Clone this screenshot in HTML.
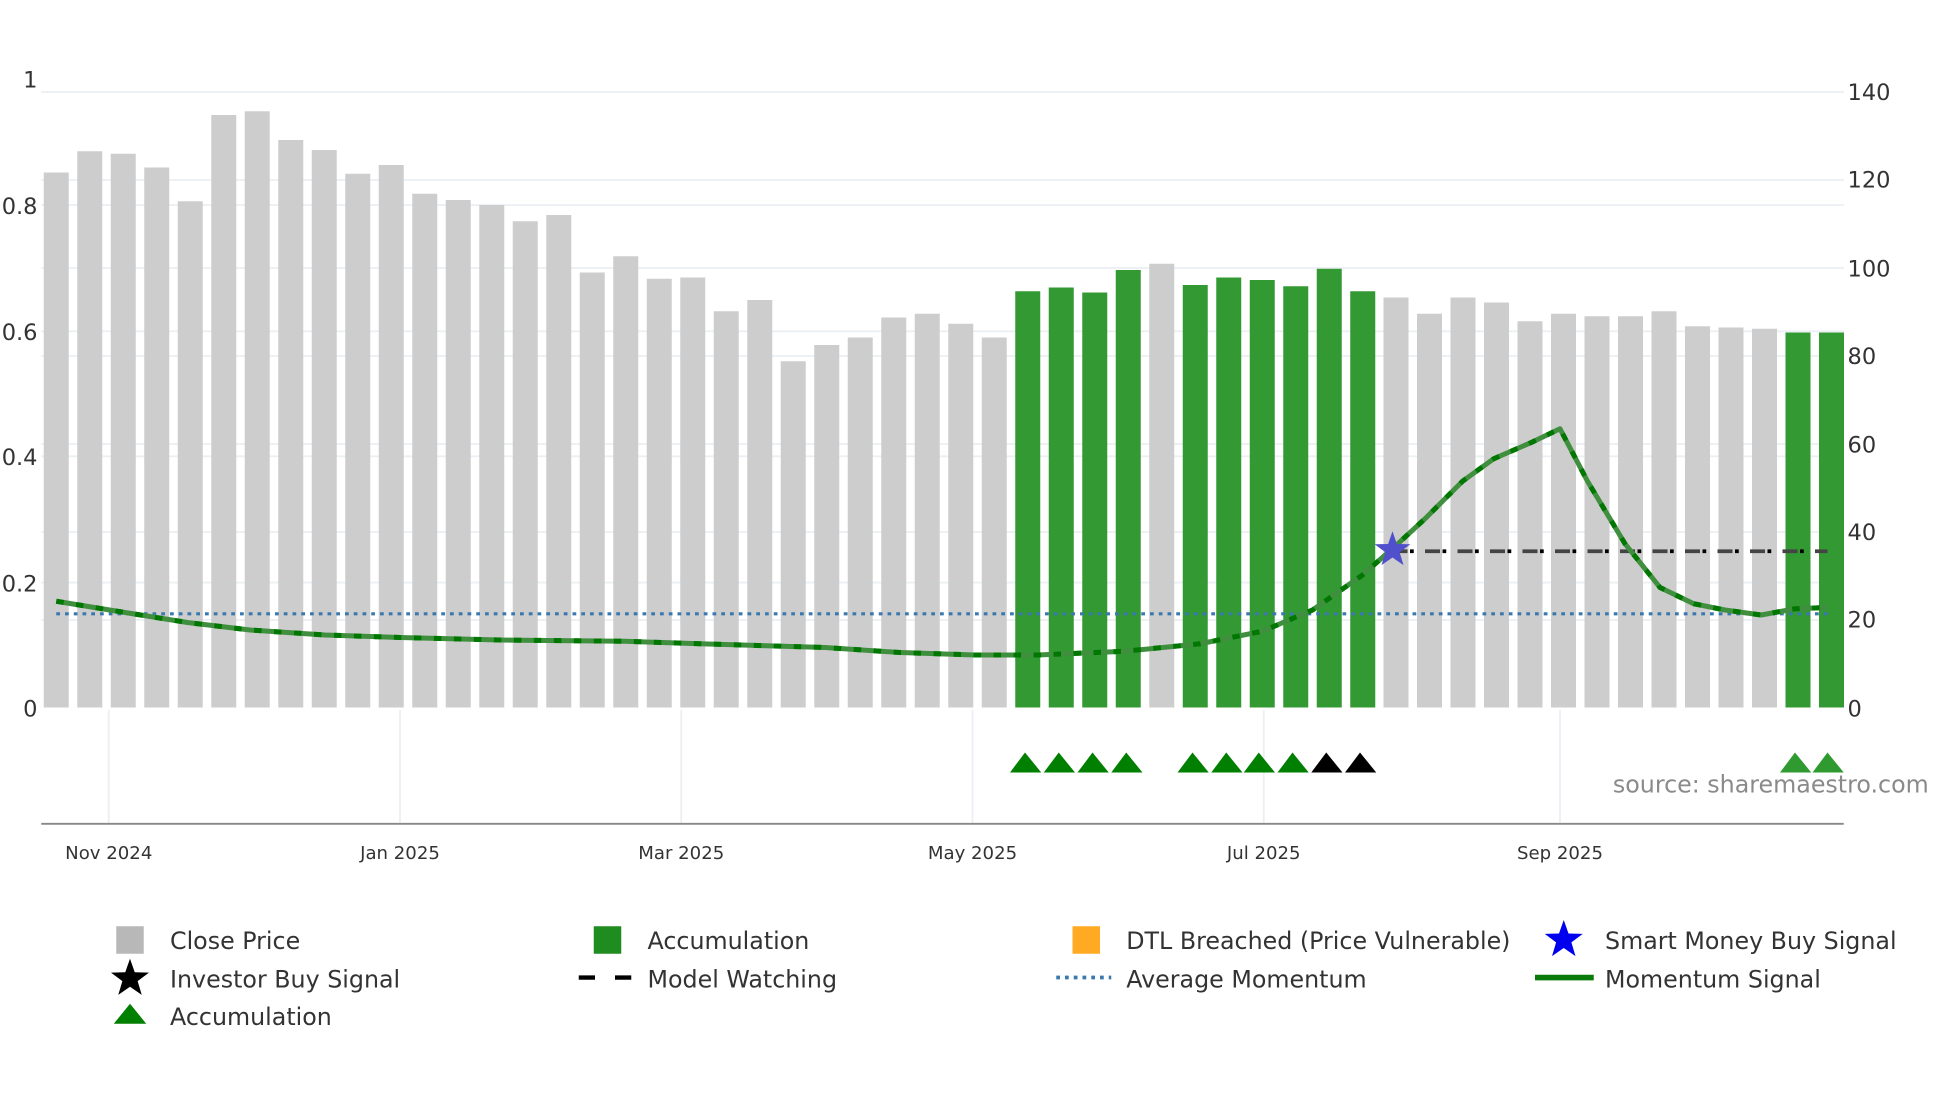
<!DOCTYPE html>
<html><head><meta charset="utf-8"><style>
html,body{margin:0;padding:0;background:#fff;width:1960px;height:1102px;overflow:hidden}
svg{display:block}
text{font-family:"DejaVu Sans","Liberation Sans",sans-serif}
</style></head><body>
<svg width="1960" height="1102" viewBox="0 0 1568 881.6" xmlns="http://www.w3.org/2000/svg">
<rect width="1568" height="881.6" fill="#fff"/>
<g stroke="#eceff4" stroke-width="1.5">
<line x1="33" x2="1475" y1="73.5" y2="73.5"/><line x1="33" x2="1475" y1="143.9" y2="143.9"/>
<line x1="33" x2="1475" y1="214.3" y2="214.3"/><line x1="33" x2="1475" y1="284.7" y2="284.7"/>
<line x1="33" x2="1475" y1="355.1" y2="355.1"/><line x1="33" x2="1475" y1="425.5" y2="425.5"/>
<line x1="33" x2="1475" y1="495.9" y2="495.9"/>
<line x1="33" x2="1475" y1="164" y2="164"/><line x1="33" x2="1475" y1="265" y2="265"/>
<line x1="33" x2="1475" y1="365" y2="365"/><line x1="33" x2="1475" y1="466" y2="466"/>
<line x1="87" x2="87" y1="568" y2="659"/><line x1="320" x2="320" y1="568" y2="659"/>
<line x1="545" x2="545" y1="568" y2="659"/><line x1="778" x2="778" y1="568" y2="659"/>
<line x1="1011" x2="1011" y1="568" y2="659"/><line x1="1248" x2="1248" y1="568" y2="659"/>
</g>
<g fill="#cacaca" fill-opacity="0.95">
<rect x="35" y="138" width="20" height="428"/><rect x="61.8" y="121" width="20" height="445"/>
<rect x="88.6" y="123" width="20" height="443"/><rect x="115.4" y="134" width="20" height="432"/>
<rect x="142.2" y="161" width="20" height="405"/><rect x="169" y="92" width="20" height="474"/>
<rect x="195.8" y="89" width="20" height="477"/><rect x="222.6" y="112" width="20" height="454"/>
<rect x="249.4" y="120" width="20" height="446"/><rect x="276.2" y="139" width="20" height="427"/>
<rect x="303" y="132" width="20" height="434"/><rect x="329.8" y="155" width="20" height="411"/>
<rect x="356.6" y="160" width="20" height="406"/><rect x="383.4" y="164" width="20" height="402"/>
<rect x="410.2" y="177" width="20" height="389"/><rect x="437" y="172" width="20" height="394"/>
<rect x="463.8" y="218" width="20" height="348"/><rect x="490.6" y="205" width="20" height="361"/>
<rect x="517.4" y="223" width="20" height="343"/><rect x="544.2" y="222" width="20" height="344"/>
<rect x="571" y="249" width="20" height="317"/><rect x="597.8" y="240" width="20" height="326"/>
<rect x="624.6" y="289" width="20" height="277"/><rect x="651.4" y="276" width="20" height="290"/>
<rect x="678.2" y="270" width="20" height="296"/><rect x="705" y="254" width="20" height="312"/>
<rect x="731.8" y="251" width="20" height="315"/><rect x="758.6" y="259" width="20" height="307"/>
<rect x="785.4" y="270" width="20" height="296"/>
<rect x="919.4" y="211" width="20" height="355"/>
<rect x="1106.8" y="238" width="20" height="328"/><rect x="1133.6" y="251" width="20" height="315"/>
<rect x="1160.4" y="238" width="20" height="328"/><rect x="1187.2" y="242" width="20" height="324"/>
<rect x="1214" y="257" width="20" height="309"/><rect x="1240.8" y="251" width="20" height="315"/>
<rect x="1267.6" y="253" width="20" height="313"/><rect x="1294.4" y="253" width="20" height="313"/>
<rect x="1321.2" y="249" width="20" height="317"/><rect x="1348" y="261" width="20" height="305"/>
<rect x="1374.8" y="262" width="20" height="304"/><rect x="1401.6" y="263" width="20" height="303"/>
</g>
<g fill="#339933">
<rect x="812.2" y="233" width="20" height="333"/><rect x="839" y="230" width="20" height="336"/>
<rect x="865.8" y="234" width="20" height="332"/><rect x="892.6" y="216" width="20" height="350"/>
<rect x="946.2" y="228" width="20" height="338"/><rect x="973" y="222" width="20" height="344"/>
<rect x="999.8" y="224" width="20" height="342"/><rect x="1026.6" y="229" width="20" height="337"/>
<rect x="1053.4" y="215" width="20" height="351"/><rect x="1080.2" y="233" width="20" height="333"/>
<rect x="1428.4" y="266" width="20" height="300"/><rect x="1455.2" y="266" width="20" height="300"/>
</g>
<line x1="45" x2="1462" y1="491" y2="491" stroke="#3a78b0" stroke-width="2.5" stroke-dasharray="3 4"/>
<line x1="1114" x2="1462" y1="441" y2="441" stroke="#444" stroke-width="3" stroke-dasharray="12 14"/>
<line x1="1114" x2="1462" y1="441" y2="441" stroke="#000" stroke-width="3" stroke-dasharray="3 23" stroke-dashoffset="-14"/>
<polyline fill="none" stroke="#3f8f3f" stroke-width="4" stroke-linejoin="round" points="45,481 100,490 150,498 200,504 260,508 320,510 400,512 500,513 560,515 660,518 720,522 780,524 830,524 900,521 960,515 1010,505 1050,488 1090,460 1115,438 1140,415 1170,385 1195,367 1225,354 1248,343 1270,385 1300,435 1328,470 1355,483 1380,488 1409,492 1436,487 1462,486"/>
<polyline fill="none" stroke="#007700" stroke-width="4" stroke-dasharray="6 10" points="45,481 100,490 150,498 200,504 260,508 320,510 400,512 500,513 560,515 660,518 720,522 780,524 830,524 900,521 960,515 1010,505 1050,488 1090,460 1115,438 1140,415 1170,385 1195,367 1225,354 1248,343 1270,385 1300,435 1328,470 1355,483 1380,488 1409,492 1436,487 1462,486"/>
<polygon transform="translate(1114,440)" fill="#5050cc" points="0,-15 3.5,-4.8 14.3,-4.6 5.7,1.8 8.8,12.1 0,6 -8.8,12.1 -5.7,1.8 -14.3,-4.6 -3.5,-4.8"/>
<g fill="#007f00">
<polygon points="808,618 820,602 833,618"/><polygon points="835,618 847,602 860,618"/>
<polygon points="862,618 874,602 887,618"/><polygon points="889,618 901,602 914,618"/>
<polygon points="942,618 954,602 967,618"/><polygon points="969,618 981,602 994,618"/>
<polygon points="995,618 1007,602 1020,618"/><polygon points="1022,618 1034,602 1047,618"/>
</g>
<g fill="#000"><polygon points="1049,618 1061,602 1074,618"/><polygon points="1076,618 1088,602 1101,618"/></g>
<g fill="#2f9a2f"><polygon points="1424,618 1436,602 1449,618"/><polygon points="1450,618 1462,602 1475,618"/></g>
<text x="1543" y="634" font-size="19" fill="#8a8a8a" text-anchor="end">source: sharemaestro.com</text>
<line x1="33" x2="1475" y1="659" y2="659" stroke="#888" stroke-width="1.5"/>
<g font-size="14.5" fill="#333" text-anchor="middle">
<text x="87" y="687">Nov 2024</text><text x="320" y="687">Jan 2025</text><text x="545" y="687">Mar 2025</text>
<text x="778" y="687">May 2025</text><text x="1011" y="687">Jul 2025</text><text x="1248" y="687">Sep 2025</text>
</g>
<g font-size="18" fill="#333" text-anchor="end">
<text x="30" y="70">1</text><text x="30" y="171">0.8</text><text x="30" y="272">0.6</text>
<text x="30" y="372">0.4</text><text x="30" y="473">0.2</text><text x="30" y="573">0</text>
</g>
<g font-size="18" fill="#333">
<text x="1478" y="80">140</text><text x="1478" y="150">120</text><text x="1478" y="221">100</text>
<text x="1478" y="291">80</text><text x="1478" y="362">60</text><text x="1478" y="432">40</text>
<text x="1478" y="502">20</text><text x="1478" y="573">0</text>
</g>
<g font-size="19" fill="#333">
<rect x="93" y="741" width="22" height="22" fill="#b8b8b8"/><text x="136" y="759">Close Price</text>
<rect x="475" y="741" width="22" height="22" fill="#1e8c1e"/><text x="518" y="759">Accumulation</text>
<rect x="858" y="741" width="22" height="22" fill="#ffaa22"/><text x="901" y="759">DTL Breached (Price Vulnerable)</text>
<polygon transform="translate(1251,752)" fill="#0000ee" points="0,-16 3.8,-5.2 15.2,-4.9 6.1,1.9 9.4,12.9 0,6.4 -9.4,12.9 -6.1,1.9 -15.2,-4.9 -3.8,-5.2"/><text x="1284" y="759">Smart Money Buy Signal</text>
<polygon transform="translate(104,783)" fill="#000" points="0,-16 3.8,-5.2 15.2,-4.9 6.1,1.9 9.4,12.9 0,6.4 -9.4,12.9 -6.1,1.9 -15.2,-4.9 -3.8,-5.2"/><text x="136" y="790">Investor Buy Signal</text>
<line x1="463" x2="507" y1="782" y2="782" stroke="#000" stroke-width="3.5" stroke-dasharray="13 16"/><text x="518" y="790">Model Watching</text>
<line x1="845" x2="889" y1="782" y2="782" stroke="#3a78b0" stroke-width="3" stroke-dasharray="3 4"/><text x="901" y="790">Average Momentum</text>
<line x1="1228" x2="1275" y1="782" y2="782" stroke="#0a7a0a" stroke-width="4.5"/><text x="1284" y="790">Momentum Signal</text>
<polygon points="91,819 104,803 117,819" fill="#007f00"/><text x="136" y="820">Accumulation</text>
</g>
</svg>
</body></html>
